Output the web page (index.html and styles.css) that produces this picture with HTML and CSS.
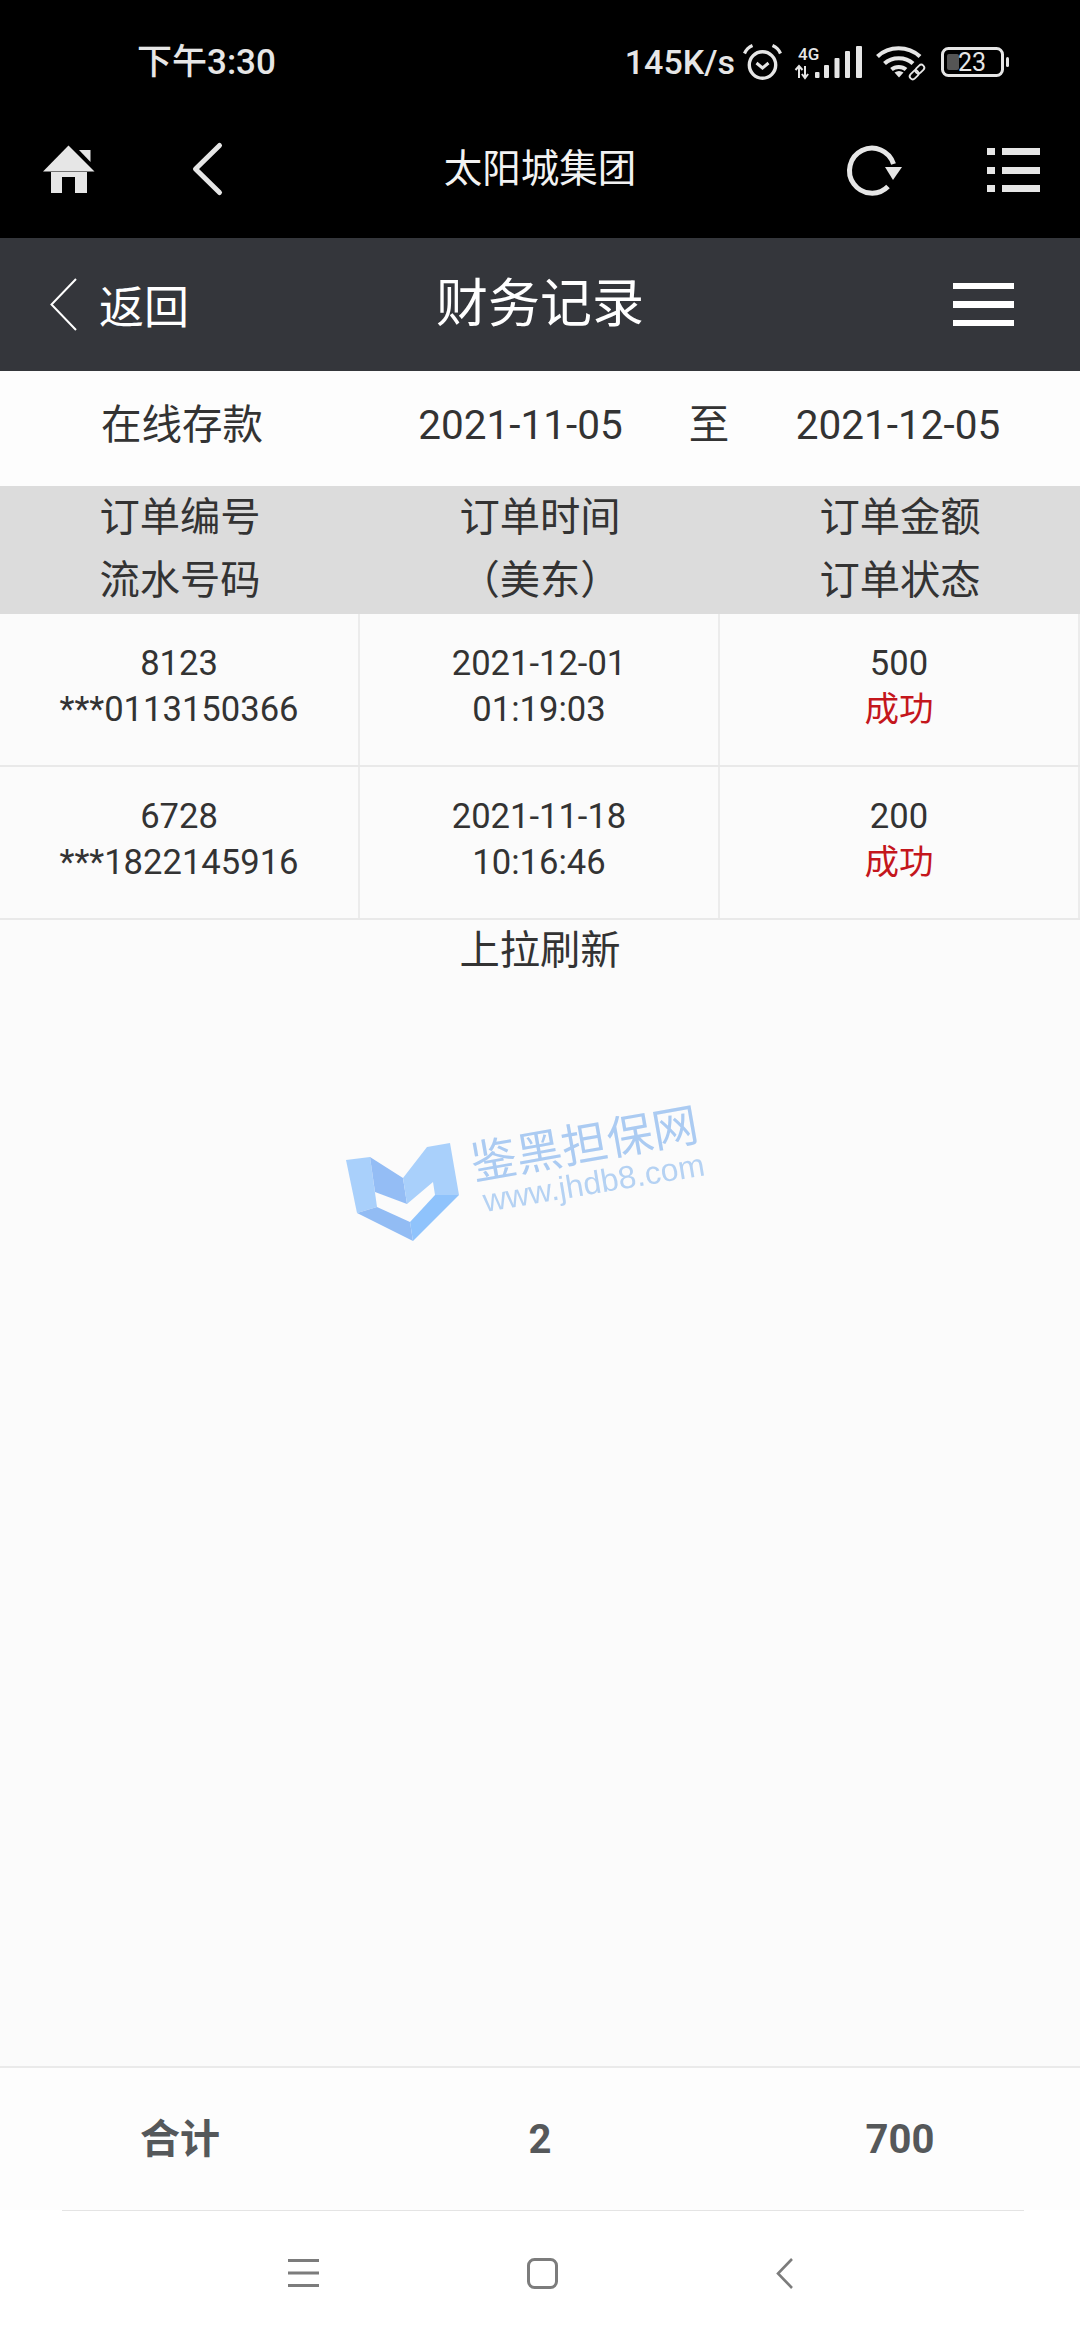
FILE: index.html
```html
<!DOCTYPE html>
<html lang="zh-CN">
<head>
<meta charset="utf-8">
<title>财务记录</title>
<link rel="stylesheet" href="styles.css">
</head>
<body>
<div class="screen">
  <header class="chrome">
    <div class="status">
      <span class="clock">下午3:30</span>
      <div class="status-icons">
        <span class="speed">145K/s</span>
        <svg class="ic-alarm" viewBox="0 0 39 36" fill="none" stroke="currentColor">
          <circle cx="19.5" cy="21" r="13.2" stroke-width="3.4"/>
          <path d="M13.5 19l6 5 6-5" stroke-width="3"/>
          <path d="M1.5 9.5C3 6 6 3 9.5 1.5M37.5 9.5C36 6 33 3 29.5 1.5" stroke-width="3.2"/>
        </svg>
        <svg class="ic-signal" viewBox="0 0 67 35" fill="currentColor">
          <text class="net-label" x="3" y="15">4G</text>
          <path d="M4 21v12M0.5 25l3.500-4 3.500 4M10 33V21M6.900 29l3.100 4 3.100-4" fill="none" stroke="currentColor" stroke-width="2"/>
          <rect x="20" y="27" width="4.500" height="6" rx="1"/>
          <rect x="29" y="20" width="5" height="13" rx="1"/>
          <rect x="39.500" y="13" width="5" height="20" rx="1"/>
          <rect x="50" y="6" width="5" height="27" rx="1"/>
          <rect x="61" y="1" width="6" height="32" rx="1"/>
        </svg>
        <svg class="ic-wifi" viewBox="0 0 50 33" fill="none" stroke="currentColor">
          <path d="M1.500 10.500C13 -0.500 32 -0.500 44 10.500" stroke-width="4.200"/>
          <path d="M8.500 17.500C16 10.500 29.500 10.500 37 17.500" stroke-width="4.200"/>
          <path d="M15.500 23.500C19.500 20 26 20 30 23.500" stroke-width="4"/>
          <path d="M18.500 26.500l4.500 5 4.500-5C24.500 24.500 21.500 24.500 18.500 26.500Z" fill="currentColor" stroke="none"/>
          <g stroke-width="1.800" transform="rotate(-45 41 26)">
            <rect x="32" y="23" width="10" height="6" rx="3"/>
            <rect x="40" y="23" width="10" height="6" rx="3"/>
          </g>
        </svg>
        <svg class="ic-battery" viewBox="0 0 68 30">
          <rect x="1.500" y="1.500" width="60" height="27" rx="6" fill="none" stroke="currentColor" stroke-width="3"/>
          <rect x="6" y="7" width="12" height="16" rx="2" fill="#555"/>
          <rect x="65" y="10" width="3" height="10" rx="1.500" fill="currentColor"/>
          <text class="battery-level" x="31" y="24" text-anchor="middle">23</text>
        </svg>
      </div>
    </div>
    <div class="browser-bar">
      <div class="browser-left">
        <svg class="ic-home" viewBox="0 0 52 48" fill="currentColor">
          <path d="M0 26.500L25.500 0.500L51.500 26.500Z"/>
          <path d="M36 5H47.500V17Z"/>
          <path d="M8 27H44V48H32V32H19V48H8Z"/>
        </svg>
        <svg class="ic-back" viewBox="0 0 30 52" fill="none" stroke="currentColor">
          <path d="M27.500 2.500L3.500 26L27.500 49.500" stroke-width="5" stroke-linecap="round" stroke-linejoin="round"/>
        </svg>
      </div>
      <div class="browser-title">太阳城集团</div>
      <div class="browser-right">
        <svg class="ic-refresh" viewBox="0 0 55 50" fill="none" stroke="currentColor">
          <path d="M41 42.500A22.500 22.500 0 1 1 46.500 20" stroke-width="5"/>
          <path d="M38 23H55L46 36Z" fill="currentColor" stroke="none"/>
        </svg>
        <svg class="ic-list" viewBox="0 0 53 45" fill="currentColor">
          <rect x="0" y="1" width="8" height="7"/>
          <rect x="15" y="1" width="38" height="7"/>
          <rect x="0" y="20" width="8" height="7"/>
          <rect x="15" y="20" width="38" height="7"/>
          <rect x="0" y="38" width="8" height="7"/>
          <rect x="15" y="38" width="38" height="7"/>
        </svg>
      </div>
    </div>
  </header>

  <nav class="page-bar">
    <div class="page-back">
      <svg class="ic-thin-back" viewBox="0 0 27 53" fill="none" stroke="currentColor">
        <path d="M26 1L1.500 26.500L26 52" stroke-width="2"/>
      </svg>
      <span>返回</span>
    </div>
    <h1 class="page-title">财务记录</h1>
    <div class="page-menu">
      <span class="menu-bar"></span>
      <span class="menu-bar"></span>
      <span class="menu-bar"></span>
    </div>
  </nav>

  <main class="content">
    <div class="filter">
      <span>在线存款</span>
      <span>2021-11-05</span>
      <span>至</span>
      <span>2021-12-05</span>
    </div>

    <div class="table-head">
      <div>订单编号<br>流水号码</div>
      <div>订单时间<br>（美东）</div>
      <div>订单金额<br>订单状态</div>
    </div>

    <div class="table-row">
      <div class="cell">8123<br>***0113150366</div>
      <div class="cell">2021-12-01<br>01:19:03</div>
      <div class="cell">500<br><span class="ok">成功</span></div>
    </div>
    <div class="table-row">
      <div class="cell">6728<br>***1822145916</div>
      <div class="cell">2021-11-18<br>10:16:46</div>
      <div class="cell">200<br><span class="ok">成功</span></div>
    </div>

    <div class="pull-hint">上拉刷新</div>

    <svg class="stamp" viewBox="0 0 390 170">
      <path fill="#a9d0fb" d="M6 76L30 73L37 123L17 129Z"/>
      <path fill="#94bdf5" d="M30 73L63 94L67 120L35 108Z"/>
      <path fill="#92bcf4" d="M17 129L37 123L70 138L73 157Z"/>
      <path fill="#8fc3fc" d="M73 157L70 138L95 111L119 111Z"/>
      <path fill="#a9d0fb" d="M63 94L87 63L110 59L119 111L95 111L93 98L67 120Z"/>
      <text class="stamp-name" x="134" y="96" transform="rotate(-10 134 96)">鉴黑担保网</text>
      <text class="stamp-url" x="145" y="128" transform="rotate(-9.500 145 128)">www.jhdb8.com</text>
    </svg>
  </main>

  <section class="summary">
    <span>合计</span>
    <span>2</span>
    <span>700</span>
  </section>

  <footer class="system-nav">
    <svg class="ic-sys-menu" viewBox="0 0 31 28" fill="#7c7c7c">
      <rect y="0" width="31" height="3"/>
      <rect y="12.500" width="31" height="3"/>
      <rect y="25" width="31" height="3"/>
    </svg>
    <svg class="ic-sys-home" viewBox="0 0 31 31" fill="none" stroke="#7c7c7c">
      <rect x="1.500" y="1.500" width="28" height="28" rx="6" stroke-width="3"/>
    </svg>
    <svg class="ic-sys-back" viewBox="0 0 17 31" fill="none" stroke="#7c7c7c">
      <path d="M16 1L2 15.500L16 30" stroke-width="2.600"/>
    </svg>
  </footer>
</div>
</body>
</html>
```

FILE: styles.css
```css
* { box-sizing: border-box; }

html, body {
  margin: 0;
  padding: 0;
}

body {
  font-family: Roboto, "Noto Sans CJK SC", sans-serif;
  color: #333;
  background: #fbfbfb;
}

svg { display: block; flex: none; overflow: visible; }

.screen {
  width: 1080px;
  height: 2340px;
  display: flex;
  flex-direction: column;
  overflow: hidden;
}

/* Phone status area and in-app browser toolbar */
.chrome {
  height: 238px;
  background: #000;
  color: #e6e6e6;
}

.status {
  height: 124px;
  padding: 0 71px 0 137px;
  display: flex;
  align-items: center;
  justify-content: space-between;
}

.clock {
  margin-top: 2px;
  font-size: 35px;
  font-weight: 500;
  line-height: 40px;
}

.speed {
  font-size: 34px;
  font-weight: 500;
  line-height: 40px;
}

.status-icons {
  display: flex;
  align-items: center;
}

.ic-alarm { width: 39px; height: 36px; margin-left: 8px; }
.ic-signal { width: 67px; height: 35px; margin-left: 13px; }
.ic-wifi { width: 50px; height: 33px; margin-left: 14px; }
.ic-battery { width: 68px; height: 30px; margin-left: 15px; }

.net-label {
  font-family: Roboto, sans-serif;
  font-size: 17px;
  font-weight: 500;
}

.battery-level {
  font-family: Roboto, sans-serif;
  font-size: 25px;
  fill: currentColor;
}

.browser-bar {
  height: 90px;
  display: grid;
  grid-template-columns: 1fr auto 1fr;
  align-items: center;
}

.browser-left,
.browser-right {
  display: flex;
  align-items: center;
}

.browser-left { padding-left: 43px; gap: 97px; }
.browser-right { justify-content: flex-end; padding-right: 40px; gap: 85px; }

.browser-title {
  font-size: 38.500px;
  line-height: 50px;
  color: #f2f2f2;
}

.ic-home { width: 52px; height: 48px; }
.ic-back { width: 30px; height: 52px; }
.ic-refresh { width: 55px; height: 50px; }
.ic-list { width: 53px; height: 45px; }

/* Page title bar */
.page-bar {
  height: 133px;
  background: #34363b;
  color: #fff;
  display: grid;
  grid-template-columns: 1fr auto 1fr;
  align-items: center;
}

.page-back {
  display: flex;
  align-items: center;
  gap: 22px;
  padding-left: 50px;
  font-size: 45px;
}

.ic-thin-back { width: 27px; height: 53px; }

.page-title {
  margin: 0;
  font-size: 52px;
  font-weight: 400;
  line-height: 70px;
}

.page-menu {
  justify-self: end;
  margin-right: 66px;
  width: 61px;
  display: flex;
  flex-direction: column;
  gap: 12px;
}

.menu-bar {
  height: 6.500px;
  background: #fff;
}

/* Records table */
.content {
  position: relative;
  flex: 1;
  background: #fbfbfb;
}

.filter {
  height: 115px;
  background: #fdfdfd;
  padding-top: 26px;
  display: grid;
  grid-template-columns: 364px 313px 64px 314px;
  align-items: baseline;
  justify-items: center;
  font-size: 40.500px;
  line-height: 56px;
}

.table-head {
  height: 128px;
  background: #dcdcdc;
  padding-bottom: 2px;
  display: grid;
  grid-template-columns: repeat(3, 360px);
  align-items: center;
  text-align: center;
  font-size: 40.300px;
  line-height: 63px;
}

.table-row {
  height: 153px;
  display: grid;
  grid-template-columns: repeat(3, 360px);
  border-bottom: 2px solid #e9e9e9;
}

.cell {
  padding-top: 26px;
  text-align: center;
  font-size: 34.600px;
  line-height: 46px;
  border-right: 2px solid #ececec;
}

.ok { color: #c4161c; }

.pull-hint {
  text-align: center;
  font-size: 40.300px;
  line-height: 62px;
}

/* Watermark laid over the empty list area */
.stamp {
  position: absolute;
  left: 340px;
  top: 713px;
  width: 390px;
  height: 170px;
  filter: blur(0.6px);
}

.stamp-name {
  font-family: "Noto Sans CJK SC", sans-serif;
  font-size: 46px;
  fill: #abcbf2;
}

.stamp-url {
  font-family: "Liberation Sans", sans-serif;
  font-size: 32px;
  fill: #b5d2f3;
}

/* Totals strip */
.summary {
  height: 144px;
  background: #fdfdfd;
  border-top: 2px solid #eaeaea;
  padding-top: 44px;
  display: grid;
  grid-template-columns: repeat(3, 360px);
  align-items: baseline;
  justify-items: center;
  font-size: 40px;
  line-height: 56px;
  font-weight: 700;
  color: #55585a;
}

/* Phone navigation keys */
.system-nav {
  height: 130px;
  background: #fff;
  position: relative;
  display: flex;
  align-items: center;
  justify-content: center;
  padding-bottom: 4px;
}

.system-nav::before {
  content: "";
  position: absolute;
  left: 62px;
  right: 56px;
  top: 0;
  height: 1px;
  background: #e4e4e4;
}

.ic-sys-menu { width: 31px; height: 28px; }
.ic-sys-home { width: 31px; height: 31px; margin-left: 208px; }
.ic-sys-back { width: 17px; height: 31px; margin-left: 218px; }
```
